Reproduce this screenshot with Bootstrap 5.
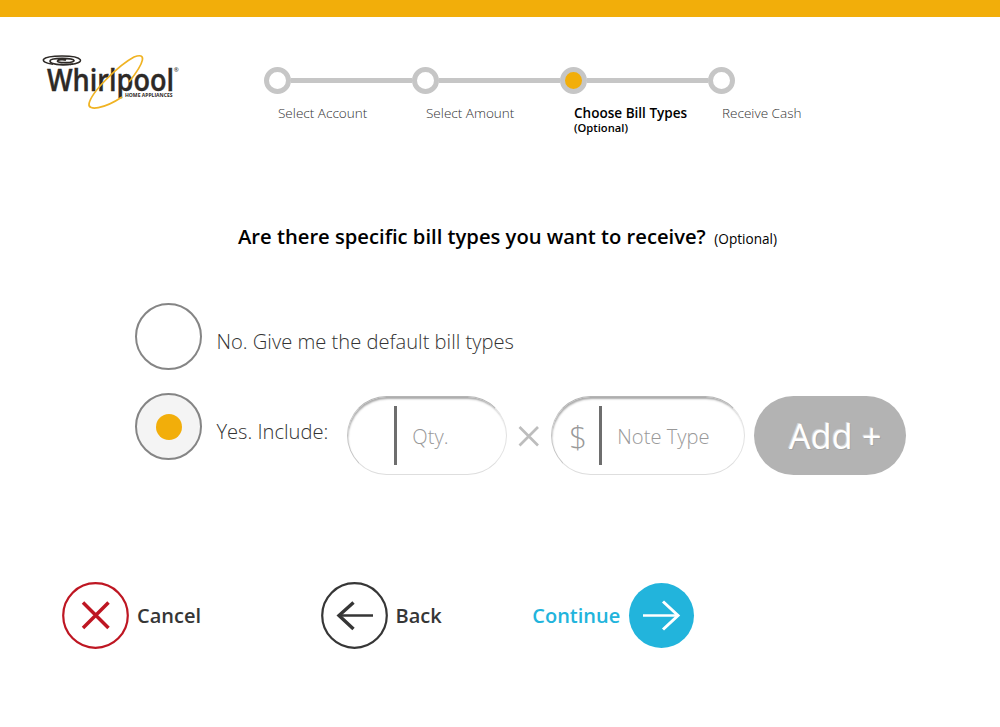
<!DOCTYPE html>
<html lang="en">
<head>
<meta charset="utf-8">
<meta name="viewport" content="width=device-width, initial-scale=1">
<title>Choose Bill Types</title>
<link href="https://cdn.jsdelivr.net/npm/bootstrap@5.3.0/dist/css/bootstrap.min.css" rel="stylesheet">
<style>
  body { font-family: "Open Sans", sans-serif; font-weight: 300; color: #333; background: #fff; height: 727px; overflow: hidden; }
  .brand-strip { height: 17px; background: #f2ae0a; }
  .page-head { height: 133px; padding-left: 36px; }
  .logo { width: 150px; height: 64px; margin-top: 33px; overflow: visible; }
  .steps { margin: 50px 0 0 78.4px; }
  .step { width: 148px; }
  .step-track { height: 27px; }
  .step-dot { width: 27px; height: 27px; border: 5px solid #c6c6c6; background: #fff; }
  .step-dot.current { background: #f2ae0a; }
  .step-line { height: 5px; background: #c6c6c6; }
  .step-label { margin: 10px 0 0 13.6px; font-size: 13.55px; line-height: 18px; white-space: nowrap; }
  .step-label small { display: block; font-size: 11.2px; line-height: 12px; }
  .fw-semi { font-weight: 600; }
  .question { height: 30px; margin: 71px 0 0 238px; line-height: 30px; color: #000; white-space: nowrap; }
  .question h1 { font-size: 20.2px; font-weight: 600; line-height: 30px; }
  .question span { font-size: 13.6px; font-weight: 400; margin-left: 8.5px; }
  .options { margin: 52px 0 0 135px; }
  .option { height: 90px; font-size: 20.15px; }
  .radio-ring { width: 67px; height: 67px; border: 2px solid #858585; margin-right: 14.4px; }
  .radio-ring.checked { background: #f4f4f4; }
  .radio-ring.checked i { width: 26px; height: 26px; background: #f2ae0a; }
  .option-text { line-height: 30px; margin-top: 23px; white-space: nowrap; }
  .pill { height: 79px; margin-top: 3px; border-radius: 40px; }
  .field { border: 1px solid; border-color: #b5b5b5 #e2e2e2 #dedede #c4c4c4; box-shadow: inset 1px 3px 2px -1px #aaa; color: #999; }
  .field b { width: 3px; height: 59px; background: #6e6e6e; }
  .field span { padding-top: 1px; }
  .field b + span { margin-left: 15px; }
  .field-qty { width: 160px; margin-left: 19px; padding-left: 46px; }
  .field-note { width: 194px; }
  .currency { width: 47px; padding-left: 17px; font-size: 31px; line-height: 40px; }
  .times { width: 44px; height: 79px; margin-top: 3px; }
  .add { width: 152px; margin-left: 9px; padding: 1px 0 0 10px; background: #b3b3b3; color: #fff; border: 0; font-size: 34px; font-weight: 500; letter-spacing: .3px; text-shadow: -1px -1px 0 #d4d4d4, 1px 1px 0 #a6a6a6; }
  .actions { margin: 99px 0 0 62px; font-size: 20px; font-weight: 600; color: #363636; }
  .action { height: 67px; gap: 8px; color: inherit; }
  .action svg { width: 67px; height: 67px; flex: none; }
  .action-back { margin-left: 119.5px; }
  .action-next { margin-left: 90.6px; color: #22b4dc; }
</style>
</head>
<body>
<div class="brand-strip"></div>
<header class="page-head d-flex align-items-start">
  <svg class="logo flex-shrink-0" viewBox="36 50 150 64" aria-label="Whirlpool Home Appliances">
    <g fill="none" stroke="#2d2926">
      <path d="M53 64.300C38 62 40 56 62 56C84 56 86 63 70 64.500" stroke-width="1.500"/>
      <path d="M73 64C60 66 50 64 50 61C50 57.500 73 57.500 74 60.500C74.500 63 59 63.500 57.500 61.300C57 59.500 64 59 66 60.300" stroke-width="1.700"/>
    </g>
    <text x="47" y="91.200" font-family="Open Sans, sans-serif" font-weight="600" font-size="31.500" fill="#2d2926" stroke="#2d2926" stroke-width=".4" textLength="127" lengthAdjust="spacingAndGlyphs">Whirlpool</text>
    <text x="125" y="97.400" font-family="Open Sans, sans-serif" font-weight="700" font-size="4.600" fill="#2d2926" textLength="47.500" lengthAdjust="spacingAndGlyphs">HOME APPLIANCES</text>
    <text x="173.700" y="72" font-family="Open Sans, sans-serif" font-weight="600" font-size="6" fill="#2d2926">®</text>
    <path d="M122 97C104 109 88 111 89 104C91 92 119 65 134 57C147 52 145 62 129 82" fill="none" stroke="#f0b323" stroke-width="1.700"/>
  </svg>
  <nav class="steps d-flex">
    <div class="step">
      <div class="step-track d-flex align-items-center"><div class="step-dot rounded-circle flex-shrink-0"></div><div class="step-line flex-fill"></div></div>
      <div class="step-label">Select Account</div>
    </div>
    <div class="step">
      <div class="step-track d-flex align-items-center"><div class="step-dot rounded-circle flex-shrink-0"></div><div class="step-line flex-fill"></div></div>
      <div class="step-label">Select Amount</div>
    </div>
    <div class="step">
      <div class="step-track d-flex align-items-center"><div class="step-dot current rounded-circle flex-shrink-0"></div><div class="step-line flex-fill"></div></div>
      <div class="step-label fw-semi text-black">Choose Bill Types<small class="fw-semi">(Optional)</small></div>
    </div>
    <div class="step">
      <div class="step-track d-flex align-items-center"><div class="step-dot rounded-circle flex-shrink-0"></div></div>
      <div class="step-label">Receive Cash</div>
    </div>
  </nav>
</header>
<main>
  <div class="question d-flex align-items-baseline">
    <h1 class="mb-0">Are there specific bill types you want to receive?</h1><span>(Optional)</span>
  </div>
  <div class="options">
    <div class="option d-flex align-items-start">
      <div class="radio-ring rounded-circle flex-shrink-0"></div>
      <div class="option-text">No. Give me the default bill types</div>
    </div>
    <div class="option d-flex align-items-start">
      <div class="radio-ring checked rounded-circle flex-shrink-0 d-flex align-items-center justify-content-center"><i class="rounded-circle"></i></div>
      <div class="option-text">Yes. Include:</div>
      <div class="pill field field-qty d-flex align-items-center flex-shrink-0"><b></b><span>Qty.</span></div>
      <svg class="times flex-shrink-0" viewBox="0 0 44 79"><path d="M12.500 31L31 49.500M31 31L12.500 49.500" stroke="#bdbdbd" stroke-width="2.700"/></svg>
      <div class="pill field field-note d-flex align-items-center flex-shrink-0"><span class="currency">$</span><b></b><span>Note Type</span></div>
      <button class="pill add flex-shrink-0" type="button">Add +</button>
    </div>
  </div>
  <div class="actions d-flex">
    <a class="action d-flex align-items-center text-decoration-none" role="button">
      <svg viewBox="0 0 67 67" fill="none" stroke="#be1622"><circle cx="33.500" cy="33.500" r="32.300" stroke-width="2.200"/><path d="M21 20.500L46.500 46M46.500 20.500L21 46" stroke-width="3.500"/></svg>
      <span>Cancel</span>
    </a>
    <a class="action action-back d-flex align-items-center text-decoration-none" role="button">
      <svg viewBox="0 0 67 67" fill="none" stroke="#363636"><circle cx="33.500" cy="33.500" r="32.300" stroke-width="2.200"/><path d="M52 33.500H18" stroke-width="2.300"/><path d="M32.500 20.500L18 33.500L32.500 47" stroke-width="3.400"/></svg>
      <span>Back</span>
    </a>
    <a class="action action-next d-flex align-items-center text-decoration-none" role="button">
      <span>Continue</span>
      <svg viewBox="0 0 67 67" fill="none" stroke="#fff"><circle cx="33.500" cy="33.500" r="32.500" fill="#22b4dc" stroke="none"/><path d="M15 33.500H50" stroke-width="2.300"/><path d="M35 19.500L50 33.500L35 47.500" stroke-width="3"/></svg>
    </a>
  </div>
</main>
<script src="https://cdn.jsdelivr.net/npm/bootstrap@5.3.0/dist/js/bootstrap.bundle.min.js"></script>
</body>
</html>
